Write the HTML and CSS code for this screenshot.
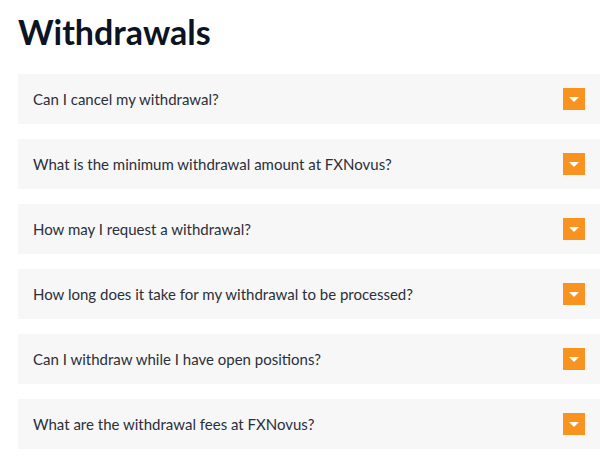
FILE: index.html
```html
<!DOCTYPE html>
<html lang="en">
<head>
    <meta charset="UTF-8">
    <meta name="viewport" content="width=device-width, initial-scale=1.0">
    <title>Withdrawals</title>
    <link rel="stylesheet" href="styles.css">
</head>
<body>

    <section class="faq">
        <h2>Withdrawals</h2>

        <div class="faq-item">
            <span>Can I cancel my withdrawal?</span>
            <span class="toggle"></span>
        </div>
        <div class="faq-item">
            <span>What is the minimum withdrawal amount at FXNovus?</span>
            <span class="toggle"></span>
        </div>
        <div class="faq-item">
            <span>How may I request a withdrawal?</span>
            <span class="toggle"></span>
        </div>
        <div class="faq-item">
            <span>How long does it take for my withdrawal to be processed?</span>
            <span class="toggle"></span>
        </div>
        <div class="faq-item">
            <span>Can I withdraw while I have open positions?</span>
            <span class="toggle"></span>
        </div>
        <div class="faq-item">
            <span>What are the withdrawal fees at FXNovus?</span>
            <span class="toggle"></span>
        </div>
    </section>

</body>
</html>
```

FILE: styles.css
```css
body {
    font-family: Lato, "Liberation Sans", sans-serif;
    margin: 0;
    padding: 0;
    background-color: #fff;
    color: #2b2f3a;
}

.faq {
    padding: 8px 12px 0 18px;
    display: flex;
    flex-direction: column;
    gap: 15px;
}

.faq h2 {
    margin: 0 0 3px;
    font-size: 34px;
    font-weight: 700;
    color: #0b1424;
    line-height: 48px;
}

.faq-item {
    background-color: #f7f7f7;
    height: 50px;
    padding: 0 15px;
    display: flex;
    align-items: center;
    justify-content: space-between;
    font-size: 15px;
}

.toggle {
    width: 22px;
    height: 22px;
    background-color: #f7931e;
    position: relative;
}

.toggle::after {
    content: "";
    position: absolute;
    left: 6px;
    top: 9px;
    border-left: 5px solid transparent;
    border-right: 5px solid transparent;
    border-top: 5px solid #fff;
}
```
